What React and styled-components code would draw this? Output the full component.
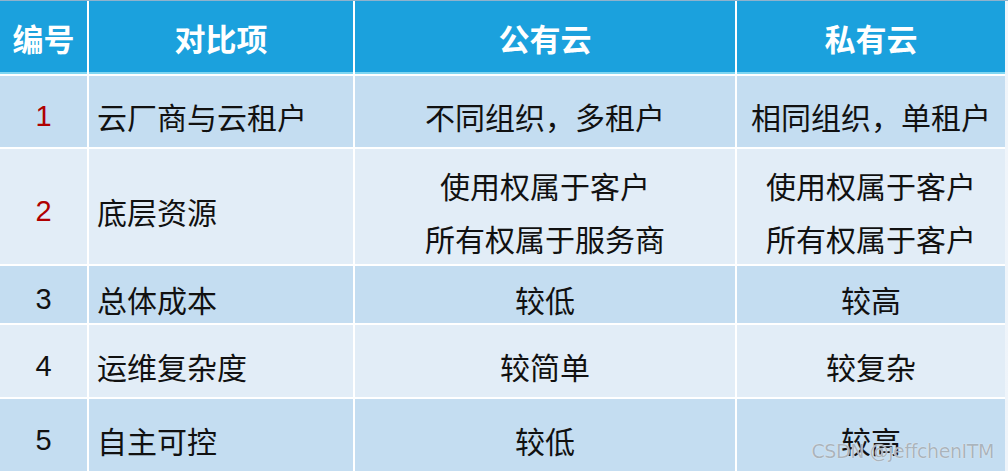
import React from "react";
import styled, { createGlobalStyle } from "styled-components";

const GlobalStyle = createGlobalStyle`
  html, body {
    margin: 0;
    padding: 0;
    background: #f3f7fb;
    font-family: "Noto Sans CJK SC", "Liberation Sans", sans-serif;
  }
`;

const Page = styled.div`
  position: relative;
  width: 1008px;
  height: 471px;
  overflow: hidden;
  background: linear-gradient(135deg, #f6f9fc 0%, #eef4fa 100%);
  border-top: 1px solid #8fb2cc;
  box-sizing: border-box;
`;

const Table = styled.div`
  width: 1005px;
  display: grid;
  grid-template-columns: 87px 264px 380px 1fr;
  grid-template-rows: 73px 71px 115px 57px 72px 72px;
  gap: 2px;
  background: #ffffff;
`;

const HeaderCell = styled.div`
  background: #1ba1dd;
  color: #ffffff;
  font-weight: 700;
  font-size: 31px;
  display: flex;
  align-items: center;
  justify-content: center;
  border-bottom: 2px solid #7fd6f2;
  box-sizing: border-box;
  padding-top: 2px;
`;

const Cell = styled.div`
  background: ${(p) => (p.$odd ? "#c4ddf1" : "#e2edf7")};
  color: ${(p) => (p.$red ? "#b00000" : "#111111")};
  font-size: ${(p) => (p.$num ? "29px" : "30px")};
  line-height: 53px;
  display: flex;
  flex-direction: column;
  align-items: ${(p) => (p.$left ? "flex-start" : "center")};
  justify-content: center;
  padding: 10px 0 0 ${(p) => (p.$left ? "8px" : "0")};
  box-sizing: border-box;
  font-family: ${(p) =>
    p.$num
      ? `"Liberation Sans", "Noto Sans CJK SC", sans-serif`
      : `"Noto Sans CJK SC", "Liberation Sans", sans-serif`};
`;

const Line = styled.span`
  display: block;
  white-space: nowrap;
`;

const Watermark = styled.div`
  position: absolute;
  right: 14px;
  bottom: 9px;
  font-family: "DejaVu Sans", "Liberation Sans", sans-serif;
  font-size: 19px;
  color: #aab4bc;
  text-shadow: 0 0 1px #ffffff;
  letter-spacing: -0.4px;
`;

const headers = ["编号", "对比项", "公有云", "私有云"];

const rows = [
  { no: "1", red: true, item: "云厂商与云租户", pub: ["不同组织，多租户"], pri: ["相同组织，单租户"] },
  {
    no: "2",
    red: true,
    item: "底层资源",
    pub: ["使用权属于客户", "所有权属于服务商"],
    pri: ["使用权属于客户", "所有权属于客户"],
  },
  { no: "3", item: "总体成本", pub: ["较低"], pri: ["较高"] },
  { no: "4", item: "运维复杂度", pub: ["较简单"], pri: ["较复杂"] },
  { no: "5", item: "自主可控", pub: ["较低"], pri: ["较高"] },
];

export default function App() {
  return (
    <>
      <GlobalStyle />
      <Page>
        <Table>
          {headers.map((h) => (
            <HeaderCell key={h}>{h}</HeaderCell>
          ))}
          {rows.map((r, i) => {
            const odd = i % 2 === 0;
            return (
              <React.Fragment key={r.no}>
                <Cell $odd={odd} $red={r.red} $num>
                  {r.no}
                </Cell>
                <Cell $odd={odd} $left>
                  {r.item}
                </Cell>
                <Cell $odd={odd}>
                  {r.pub.map((t) => (
                    <Line key={t}>{t}</Line>
                  ))}
                </Cell>
                <Cell $odd={odd}>
                  {r.pri.map((t) => (
                    <Line key={t}>{t}</Line>
                  ))}
                </Cell>
              </React.Fragment>
            );
          })}
        </Table>
        <Watermark>CSDN @jeffchenITM</Watermark>
      </Page>
    </>
  );
}
